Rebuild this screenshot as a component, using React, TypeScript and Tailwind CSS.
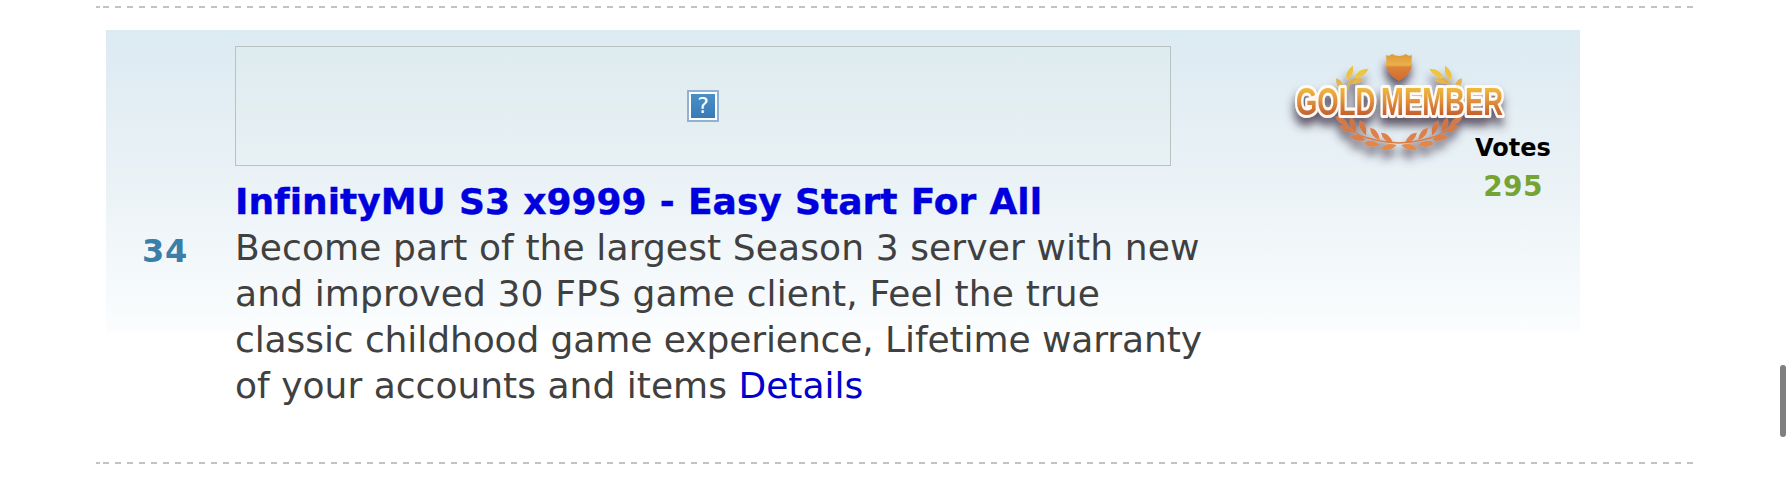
import React from 'react';

const lines = [
  { text: 'Become part of the largest Season 3 server with new', spacing: 'tracking-[0.11px]' },
  { text: 'and improved 30 FPS game client, Feel the true', spacing: 'tracking-[0.13px]' },
  { text: 'classic childhood game experience, Lifetime warranty', spacing: 'tracking-[-0.09px]' },
];

const DashedRule = () => (
  <div className="flex h-[2px] w-[1597px] gap-[3px]">
    <div className="w-1 bg-[#c4c4be]" />
    <div className="flex-1 bg-[repeating-linear-gradient(90deg,#c4c4be_0px,#c4c4be_6px,transparent_6px,transparent_12px)]" />
  </div>
);

// one side of the laurel wreath, mirrored for the other
const leaves = [
  { x: 82, y: 29, r: -32, fill: '#edc640' },
  { x: 70, y: 29, r: -68, fill: '#ecc244' },
  { x: 76, y: 37, r: -12, fill: '#e6b54c' },
  { x: 60, y: 41, r: 62, fill: '#e3b455' },
  { x: 62, y: 77, r: 35, fill: '#cf7a48' },
  { x: 73, y: 81, r: 72, fill: '#cf7444' },
  { x: 67, y: 85, r: 22, fill: '#d27a48' },
  { x: 83, y: 84, r: 68, fill: '#d47845' },
  { x: 78, y: 94, r: 12, fill: '#da7f48' },
  { x: 95, y: 90, r: 52, fill: '#dd8048' },
  { x: 92, y: 100, r: 6, fill: '#e28648' },
  { x: 107, y: 94, r: 42, fill: '#de8248' },
  { x: 109, y: 103, r: -14, fill: '#e68a48' },
];

const Laurel = () => (
  <g>
    {leaves.map((l, i) => (
      <path key={i} d="M-8 0Q-2-6 8 0Q-1 5.5-8 0Z" fill={l.fill} transform={`translate(${l.x} ${l.y}) rotate(${l.r})`} />
    ))}
    <path d="M76 34Q66 40 65 54" fill="none" stroke="#dcae50" strokeWidth="1.8" />
    <path d="M60 74Q70 96 119 99" fill="none" stroke="#d67c46" strokeWidth="1.6" />
  </g>
);

const GoldBadge = () => (
  <svg width="240" height="130" viewBox="0 0 240 130" className="overflow-visible">
    <defs>
      <linearGradient id="letters" gradientUnits="userSpaceOnUse" x1="0" y1="43" x2="0" y2="72">
        <stop offset="0" stopColor="#f0bd3e" />
        <stop offset="0.5" stopColor="#df8f3c" />
        <stop offset="1" stopColor="#c25c2c" />
      </linearGradient>
      <linearGradient id="shield" x1="0" y1="0" x2="0" y2="1">
        <stop offset="0" stopColor="#d99a38" />
        <stop offset="0.4" stopColor="#ecb04a" />
        <stop offset="0.5" stopColor="#db8238" />
        <stop offset="1" stopColor="#d06a30" />
      </linearGradient>
      <filter id="shadow" x="-20%" y="-30%" width="140%" height="170%">
        <feDropShadow dx="-1" dy="8" stdDeviation="5" floodColor="#3c3044" floodOpacity="0.8" />
      </filter>
      <filter id="soft" x="-5%" y="-5%" width="110%" height="110%">
        <feGaussianBlur stdDeviation="0.7" />
      </filter>
    </defs>
    <g filter="url(#shadow)">
      <g filter="url(#soft)">
        <path d="M106 11Q109 13 112 10Q119 14 126 10Q129 13 132 11Q131 16 132 22Q130 31 119 37Q108 31 106 22Q107 16 106 11Z" fill="url(#shield)" />
        <Laurel />
        <g transform="translate(238 0) scale(-1 1)">
          <Laurel />
        </g>
        <text
          x="16"
          y="71"
          textLength="207"
          lengthAdjust="spacingAndGlyphs"
          fontFamily="Liberation Sans"
          fontWeight="700"
          fontSize="38"
          wordSpacing="-2.5"
          fill="url(#letters)"
          stroke="#fffaf5"
          strokeWidth="6"
          strokeLinejoin="round"
          paintOrder="stroke"
        >
          GOLD MEMBER
        </text>
      </g>
    </g>
  </svg>
);

const MissingImage = () => (
  <div className="size-8 border-2 border-[#92b0d4] bg-white p-[2px]">
    <div className="flex size-6 items-center justify-center bg-linear-to-b from-[#4a90c8] to-[#387ab6] text-[22px] leading-none text-white">
      ?
    </div>
  </div>
);

const App = () => {
  return (
    <div className="flex h-[478px] w-[1792px] justify-between overflow-hidden bg-white pl-[96px] pr-[6px] pt-[6px] [font-family:'DejaVu_Sans',Verdana,sans-serif] [font-variant-ligatures:none]">
      <div className="flex w-[1597px] flex-col">
        <DashedRule />

        {/* Server entry */}
        <div className="ml-[10px] mt-[22px] flex h-[302px] w-[1474px] bg-linear-to-b from-[#dceaf2] via-[#eaf2f6] to-[#fbfdfe]">
          <div className="w-[129px] pt-[198px] pl-[36px] text-[32px] leading-[46px] font-bold tracking-[0.8px] text-[#3a7fa8]">34</div>
          <div className="w-[980px] pt-4">
            <div className="flex h-[120px] w-[936px] items-center justify-center border border-[#b8c2c2] bg-linear-to-b from-[#deebef] to-[#e8f1f4]">
              <MissingImage />
            </div>
            <div className="mt-[13px] text-[36px] leading-[46px] whitespace-nowrap text-[#404040]">
              <h2>
                <a className="font-bold text-[#0000dd] [word-spacing:0.7px] [-webkit-text-stroke:0.4px_#0000dd]">InfinityMU S3 x9999 - Easy Start For All</a>
              </h2>
              {lines.map((l) => (
                <p key={l.text} className={l.spacing}>{l.text}</p>
              ))}
              <p className="tracking-[0.02px]">
                of your accounts and items <a className="text-[#0000cc]">Details</a>
              </p>
            </div>
          </div>

          {/* Membership badge and votes */}
          <div className="relative flex-1">
            <div className="absolute left-[65px] top-[14px]">
              <GoldBadge />
            </div>
            <div className="absolute left-[258px] top-[100px] w-[80px] text-center font-bold">
              <div className="text-[24px] leading-[36px]">Votes</div>
              <div className="pt-px text-[28px] leading-[40px] tracking-[0.3px] text-[#76a434]">295</div>
            </div>
          </div>
        </div>

        <div className="mt-[130px]">
          <DashedRule />
        </div>
      </div>

      {/* Scrollbar thumb */}
      <div className="mt-[359px] h-[72px] w-[6px] rounded-full bg-[#7f7f7f]" />
    </div>
  );
};

export default App;
